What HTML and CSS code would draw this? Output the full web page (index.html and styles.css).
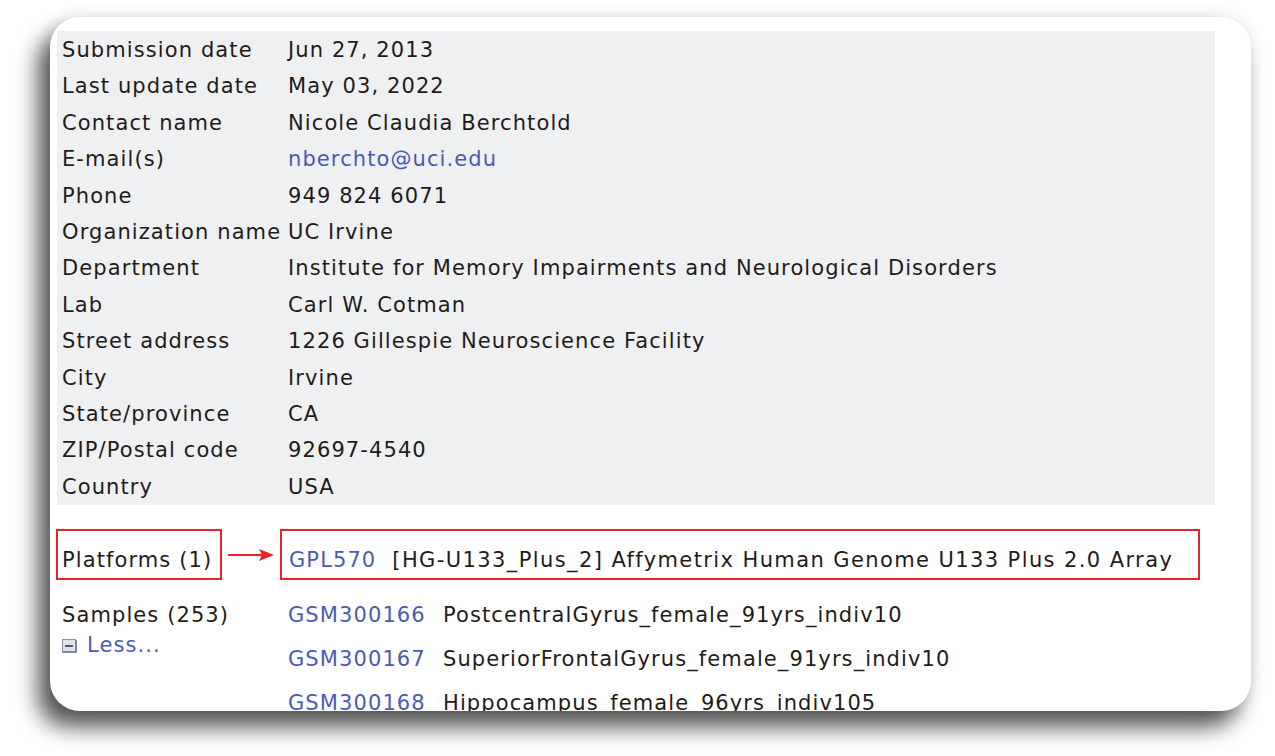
FILE: index.html
```html
<!DOCTYPE html>
<html>
<head>
<meta charset="utf-8">
<link rel="stylesheet" href="styles.css">
</head>
<body>
<div class="card">
  <div class="info">
    <div class="lbl">Submission date</div><div class="val">Jun 27, 2013</div>
    <div class="lbl">Last update date</div><div class="val">May 03, 2022</div>
    <div class="lbl">Contact name</div><div class="val">Nicole Claudia Berchtold</div>
    <div class="lbl">E-mail(s)</div><div class="val"><a class="link">nberchto@uci.edu</a></div>
    <div class="lbl">Phone</div><div class="val">949 824 6071</div>
    <div class="lbl">Organization name</div><div class="val">UC Irvine</div>
    <div class="lbl">Department</div><div class="val">Institute for Memory Impairments and Neurological Disorders</div>
    <div class="lbl">Lab</div><div class="val">Carl W. Cotman</div>
    <div class="lbl">Street address</div><div class="val">1226 Gillespie Neuroscience Facility</div>
    <div class="lbl">City</div><div class="val">Irvine</div>
    <div class="lbl">State/province</div><div class="val">CA</div>
    <div class="lbl">ZIP/Postal code</div><div class="val">92697-4540</div>
    <div class="lbl">Country</div><div class="val">USA</div>
  </div>

  <div class="platforms">
    <div class="redbox pl-label">Platforms (1)</div>
    <svg class="arrow" width="46" height="14" viewBox="0 0 46 14">
      <line x1="0" y1="7" x2="36" y2="7" stroke="#e8262a" stroke-width="2"/>
      <polygon points="31,1 46,7 31,13 34,7" fill="#e8262a"/>
    </svg>
    <div class="redbox pl-value"><a class="link">GPL570</a><span class="gap"></span><span class="pl-text">[HG-U133_Plus_2] Affymetrix Human Genome U133 Plus 2.0 Array</span></div>
  </div>

  <div class="samples">
    <div class="s-label">
      <div>Samples (253)</div>
      <div class="less">
        <svg class="minus" width="15" height="14" viewBox="0 0 15 14">
          <rect x="0.5" y="0.5" width="13" height="13" fill="#dfe2ea" stroke="#8a93a8"/>
          <rect x="1" y="12" width="13" height="2" fill="#7d869a"/>
          <rect x="13" y="1" width="2" height="13" fill="#7d869a"/>
          <rect x="3" y="6" width="8" height="2" fill="#4f5a78"/>
        </svg>
        <a class="link">Less...</a>
      </div>
    </div>
    <div class="s-list">
      <div class="s-row"><a class="link gsm">GSM300166</a><span>PostcentralGyrus_female_91yrs_indiv10</span></div>
      <div class="s-row"><a class="link gsm">GSM300167</a><span>SuperiorFrontalGyrus_female_91yrs_indiv10</span></div>
      <div class="s-row"><a class="link gsm">GSM300168</a><span>Hippocampus_female_96yrs_indiv105</span></div>
    </div>
  </div>
</div>
</body>
</html>
```

FILE: styles.css
```css
html, body {
  margin: 0;
  padding: 0;
  background: #ffffff;
  width: 1275px;
  height: 756px;
  overflow: hidden;
}
body {
  font-family: "DejaVu Sans", Verdana, sans-serif;
  font-size: 21px;
  letter-spacing: 1.1px;
  color: #1f1b19;
}
.card {
  margin: 17px 0 0 50px;
  width: 1201px;
  height: 694px;
  background: #ffffff;
  border-radius: 30px;
  overflow: hidden;
  box-shadow: -12px 16px 22px rgba(0,0,0,0.66), 0 0 18px rgba(0,0,0,0.10);
  padding: 14px 0 0 7px;
  box-sizing: border-box;
}
.info {
  width: 1158px;
  background: #eff0f2;
  display: grid;
  grid-template-columns: 231px 1fr;
  padding-top: 1px;
}
.lbl, .val {
  height: 36.4px;
  line-height: 36.4px;
  white-space: nowrap;
}
.lbl { padding-left: 5px; }
.link { color: #4a5ab5; text-decoration: none; }
.platforms {
  display: flex;
  align-items: center;
  margin-top: 24px;
  margin-left: -1px;
}
.redbox {
  border: 2px solid #e8262a;
  height: 51px;
  box-sizing: border-box;
  display: flex;
  align-items: center;
  padding-top: 10px;
  white-space: nowrap;
}
.pl-label {
  width: 166px;
  padding-left: 4px;
}
.arrow {
  margin-left: 6px;
  margin-right: 6px;
  display: block;
}
.pl-value {
  width: 920px;
  padding-left: 7px;
}
.pl-text { letter-spacing: 1.4px; }
.gap { display: inline-block; width: 16px; }
.samples {
  display: flex;
  margin-top: 20px;
}
.s-label {
  width: 226px;
  padding-left: 5px;
  line-height: 30px;
}
.less {
  display: flex;
  align-items: center;
  gap: 10px;
}
.minus { display: block; margin-top: 2px; }
.s-list {
  display: flex;
  flex-direction: column;
  gap: 14px;
}
.s-row {
  line-height: 30px;
  white-space: nowrap;
}
.gsm { display: inline-block; width: 155px; }
```
